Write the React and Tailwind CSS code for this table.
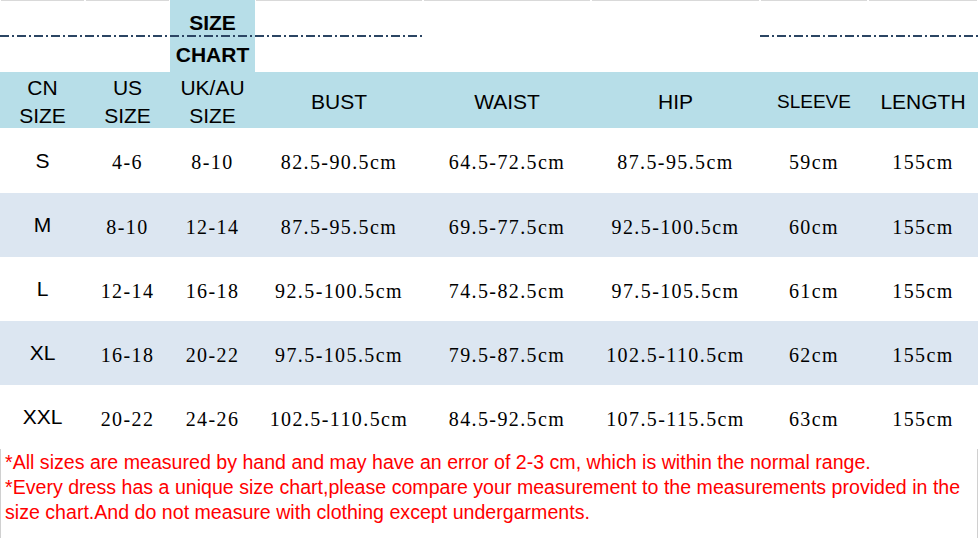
const cols = "grid grid-cols-[85px_85px_85px_168px_168px_169px_108px_110px]";

const rows = [
  ["S", "4-6", "8-10", "82.5-90.5cm", "64.5-72.5cm", "87.5-95.5cm", "59cm", "155cm"],
  ["M", "8-10", "12-14", "87.5-95.5cm", "69.5-77.5cm", "92.5-100.5cm", "60cm", "155cm"],
  ["L", "12-14", "16-18", "92.5-100.5cm", "74.5-82.5cm", "97.5-105.5cm", "61cm", "155cm"],
  ["XL", "16-18", "20-22", "97.5-105.5cm", "79.5-87.5cm", "102.5-110.5cm", "62cm", "155cm"],
  ["XXL", "20-22", "24-26", "102.5-110.5cm", "84.5-92.5cm", "107.5-115.5cm", "63cm", "155cm"],
];

function DashDot({ className }) {
  return (
    <svg className={className} height="4" preserveAspectRatio="none">
      <line x1="0" y1="2" x2="100%" y2="2" stroke="#2b4563" strokeWidth="2" strokeDasharray="9 3 2 3" />
    </svg>
  );
}

export default function App() {
  const sans = "font-['Liberation_Sans',Arial,sans-serif]";
  const serif = "font-['Liberation_Serif','Times_New_Roman',serif]";

  return (
    <div className={`w-[978px] h-[538px] bg-white text-black overflow-hidden ${sans}`}>
      {/* title strip */}
      <div className={`${cols} h-[72px] relative`}>
        {[0, 1, 2, 3, 4, 5, 6, 7].map((i) =>
          i === 2 ? (
            <div key={i} className="bg-[#b7dee8] flex flex-col items-center font-bold text-[21px] leading-[32px] pt-[7px]">
              <span>SIZE</span>
              <span>CHART</span>
            </div>
          ) : (
            <div key={i}>
              <div className="h-px bg-[#d9d9d9] mx-[1px]" />
            </div>
          )
        )}
        <DashDot className="absolute left-0 top-[34px] w-[423px]" />
        <DashDot className="absolute left-[760px] top-[34px] w-[218px]" />
      </div>

      {/* header row */}
      <div className={`${cols} h-[56px] bg-[#b7dee8] text-[21px] leading-[28px] text-center items-center pt-[2px]`}>
        <div>CN<br />SIZE</div>
        <div>US<br />SIZE</div>
        <div>UK/AU<br />SIZE</div>
        <div>BUST</div>
        <div>WAIST</div>
        <div>HIP</div>
        <div className="text-[19px]">SLEEVE</div>
        <div>LENGTH</div>
      </div>

      {/* data rows */}
      {rows.map((r, i) => (
        <div
          key={r[0]}
          className={`${cols} ${i === 0 ? "h-[65px]" : "h-[64px]"} items-center text-center ${i % 2 ? "bg-[#dce6f1]" : "bg-white"}`}
        >
          {r.map((c, j) =>
            j === 0 ? (
              <div key={j} className="text-[21px]">{c}</div>
            ) : (
              <div key={j} className={`${serif} text-[20px] tracking-[1.4px] pt-[3px]`}>{c}</div>
            )
          )}
        </div>
      ))}

      {/* notes */}
      <div className="h-[89px] border-x border-[#d0d0d0] pl-[4px] pt-[1px] text-[#ff0000] text-[19.6px] leading-[25px] whitespace-nowrap">
        <p>*All sizes are measured by hand and may have an error of 2-3 cm, which is within the normal range.</p>
        <p>*Every dress has a unique size chart,please compare your measurement to the measurements provided in the</p>
        <p>size chart.And do not measure with clothing except undergarments.</p>
      </div>
    </div>
  );
}
